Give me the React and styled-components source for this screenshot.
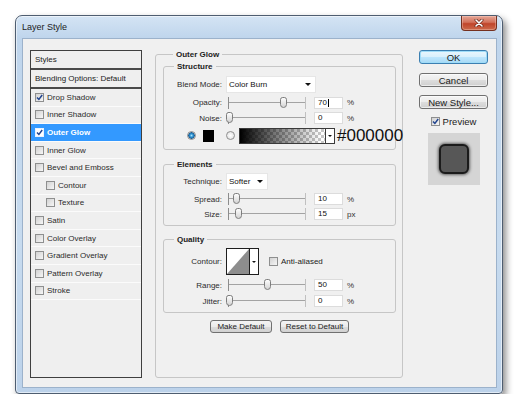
import React from "react";
import styled, { createGlobalStyle } from "styled-components";

const GlobalStyle = createGlobalStyle`
  html, body {
    margin: 0;
    padding: 0;
    background: #fff;
  }
  body {
    font-family: "Liberation Sans", Arial, sans-serif;
    color: #222;
  }
`;

const Page = styled.div`
  padding: 15px 0 0 15px;
`;

const Window = styled.div`
  box-sizing: border-box;
  width: 488px;
  height: 379px;
  display: flex;
  flex-direction: column;
  padding: 0 5px 5px 6px;
  border: 1px solid #4e5d70;
  border-radius: 7px 7px 4px 4px;
  background: linear-gradient(to bottom, #d4e4f4 0px, #bfd5ec 22px, #c7dbef 60%, #bcd2ea 100%);
  box-shadow: 3px 4px 7px rgba(0, 0, 0, 0.45), inset 0 0 0 1px rgba(255, 255, 255, 0.55);
`;

const TitleBar = styled.div`
  height: 22px;
  display: flex;
  justify-content: space-between;
  align-items: flex-start;
`;

const Title = styled.div`
  padding-top: 5px;
  font-size: 9px;
  line-height: 12px;
  color: #1b1b1b;
`;

const CloseButton = styled.div`
  box-sizing: border-box;
  width: 36px;
  height: 15px;
  display: flex;
  align-items: center;
  justify-content: center;
  border: 1px solid #74301f;
  border-top: none;
  border-radius: 0 0 4px 4px;
  background: linear-gradient(to bottom, #e6a696 0%, #d2715a 45%, #c0452a 55%, #cc6a4c 100%);
  box-shadow: inset 0 0 0 1px rgba(255, 220, 210, 0.35);
`;

const Body = styled.div`
  flex: 1;
  box-sizing: border-box;
  display: flex;
  gap: 13px;
  padding: 11px 8px 9px 7px;
  border: 1px solid #9cb2cb;
  background: #f0f0f0;
`;

/* ---------- left styles list ---------- */

const StylesPanel = styled.div`
  box-sizing: border-box;
  width: 112px;
  flex-shrink: 0;
  display: flex;
  flex-direction: column;
  border: 1px solid #3f3f3f;
  background: #efefef;
`;

const PanelHeader = styled.div`
  height: 17px;
  display: flex;
  align-items: center;
  padding-left: 4px;
  border-bottom: 2px solid #4a4a4a;
  font-size: 8px;
  color: #222;
  white-space: nowrap;
`;

const StyleItem = styled.div`
  box-sizing: border-box;
  height: 17.6px;
  display: flex;
  align-items: center;
  gap: 3px;
  padding-left: ${p => (p.$indent ? 15 : 4)}px;
  border-bottom: 1px solid #fbfbfb;
  background: ${p => (p.$selected ? "#3399ff" : "transparent")};
  color: ${p => (p.$selected ? "#fff" : "#2a2a2a")};
  font-weight: ${p => (p.$selected ? "bold" : "normal")};
  font-size: 8px;
  white-space: nowrap;
`;

const CheckBox = styled.span`
  box-sizing: border-box;
  width: 9px;
  height: 9px;
  flex-shrink: 0;
  display: inline-flex;
  align-items: center;
  justify-content: center;
  border: 1px solid ${p => (p.$onBlue ? "#e8f2ff" : "#8e8f8f")};
  background: ${p => (p.$onBlue ? "#fff" : "linear-gradient(135deg, #d2d2d2, #f6f6f6)")};
`;

const Check = () => (
  <svg width="7" height="7" viewBox="0 0 7 7">
    <path d="M1 3.4 L2.9 5.4 L6.2 1" fill="none" stroke="#22458f" strokeWidth="1.5" />
  </svg>
);

/* ---------- middle groups ---------- */

const Group = styled.fieldset`
  margin: 0;
  min-width: 0;
  border: 1px solid #c6c6c6;
  border-radius: 3px;
`;

const OuterGroup = styled(Group)`
  box-sizing: border-box;
  width: 248px;
  flex-shrink: 0;
  padding: 3px 6px 0 7px;
`;

const SubGroup = styled(Group)`
  margin-top: ${p => p.$top || 0}px;
  padding: ${p => p.$padTop}px 0 5px 0;
  display: flex;
  flex-direction: column;
  gap: ${p => p.$gap}px;
`;

const Legend = styled.legend`
  margin-left: 10px;
  padding: 0 3px;
  font-size: 8px;
  line-height: 9px;
  font-weight: bold;
  color: #222;
`;

const FieldRow = styled.div`
  display: flex;
  align-items: center;
  gap: 4px;
  height: ${p => p.$h}px;
`;

const Label = styled.div`
  width: 58px;
  flex-shrink: 0;
  text-align: right;
  font-size: 8px;
  color: #2b2b2b;
  white-space: nowrap;
`;

const Select = styled.div`
  box-sizing: border-box;
  width: ${p => p.$w}px;
  height: 17px;
  display: flex;
  align-items: center;
  justify-content: space-between;
  padding: 0 4px 0 2px;
  border: 1px solid #e6e6e6;
  background: #fff;
  font-size: 8px;
  color: #111;
`;

const DownTriangle = styled.span`
  width: 0;
  height: 0;
  border-left: ${p => p.$s || 3}px solid transparent;
  border-right: ${p => p.$s || 3}px solid transparent;
  border-top: ${p => p.$s || 3}px solid #111;
`;

const Slider = styled.div`
  position: relative;
  box-sizing: border-box;
  width: 78px;
  height: 12px;
  flex-shrink: 0;
  margin: 0 4px 0 2px;
  background: linear-gradient(to bottom, transparent 5px, #a3a3a3 5px, #a3a3a3 6px, transparent 6px);
  border-left: 1px solid #8c8c8c;
  border-right: 1px solid #c0c0c0;
  background-clip: content-box;
`;

const Thumb = styled.span`
  position: absolute;
  top: 0;
  box-sizing: border-box;
  width: 7px;
  height: 11px;
  border: 1px solid #7d7d7d;
  border-radius: 3px 3px 4px 4px;
  background: linear-gradient(to bottom, #fdfdfd, #d4d4d4);
`;

const NumberBox = styled.div`
  box-sizing: border-box;
  width: 29px;
  height: 12px;
  flex-shrink: 0;
  padding-left: 3px;
  border: 1px solid #dcdcdc;
  background: #fff;
  font-size: 8px;
  line-height: 10px;
  color: #111;
  display: flex;
  align-items: center;
`;

const Caret = styled.span`
  width: 1px;
  height: 8px;
  margin-left: 1px;
  background: #000;
`;

const Unit = styled.div`
  font-size: 8px;
  color: #333;
`;

const ColorRow = styled.div`
  display: flex;
  align-items: center;
  height: 16px;
  padding-left: 23px;
`;

const Radio = styled.span`
  box-sizing: border-box;
  width: 9px;
  height: 9px;
  flex-shrink: 0;
  border-radius: 50%;
  margin-left: ${p => p.$ml || 0}px;
  border: 1px solid #8f8f8f;
  background: ${p =>
    p.$on
      ? "radial-gradient(circle, #a8e4ff 0, #2f93d2 1.6px, #1c5f97 3px, #dedede 3.5px)"
      : "radial-gradient(circle, #ffffff 0, #e2e2e2 4px)"};
`;

const Swatch = styled.span`
  display: block;
  width: 11px;
  height: 12px;
  flex-shrink: 0;
  margin-left: 7px;
  background: #000;
`;

const GradientPicker = styled.div`
  box-sizing: border-box;
  width: 96px;
  height: 16px;
  margin-left: 4px;
  display: flex;
  border: 1px solid #3a3a3a;
  flex-shrink: 0;
`;

const GradientFill = styled.div`
  flex: 1;
  background:
    linear-gradient(to right, #000 0%, rgba(0, 0, 0, 0.55) 40%, rgba(0, 0, 0, 0) 95%),
    repeating-conic-gradient(#c6c6c6 0 25%, #ffffff 0 50%) 0 0 / 6px 6px;
`;

const PickerArrow = styled.div`
  width: 8px;
  display: flex;
  align-items: center;
  justify-content: center;
  border-left: 1px solid #3a3a3a;
  background: #fff;
`;

const HexText = styled.div`
  margin-left: 2px;
  font-size: 17px;
  line-height: 16px;
  color: #111;
  white-space: nowrap;
  flex-shrink: 0;
`;

const ContourPicker = styled.div`
  display: flex;
  height: 25px;
  flex-shrink: 0;
  border: 1px solid #1e1e1e;
  background: #fff;
`;

const ContourArrow = styled.div`
  width: 8px;
  display: flex;
  align-items: center;
  justify-content: center;
  border-left: 1px solid #1e1e1e;
`;

const InlineCheck = styled.label`
  display: flex;
  align-items: center;
  gap: 3px;
  margin-left: ${p => p.$ml || 0}px;
  margin-top: ${p => p.$mt || 0}px;
  font-size: ${p => p.$fs || 8}px;
  color: #222;
  white-space: nowrap;
`;

const ButtonRow = styled.div`
  display: flex;
  justify-content: center;
  gap: 8px;
  margin-top: 7px;
`;

const SmallButton = styled.div`
  box-sizing: border-box;
  width: ${p => p.$w}px;
  height: 13px;
  display: flex;
  align-items: center;
  justify-content: center;
  border: 1px solid #707070;
  border-radius: 3px;
  background: linear-gradient(to bottom, #f4f4f4 0%, #ebebeb 50%, #dddddd 51%, #d1d1d1 100%);
  font-size: 8px;
  color: #222;
  white-space: nowrap;
`;

/* ---------- right column ---------- */

const Side = styled.div`
  width: 69px;
  margin-left: 3px;
  display: flex;
  flex-direction: column;
  align-items: center;
`;

const DialogButton = styled.div`
  box-sizing: border-box;
  width: 69px;
  height: 14px;
  margin-top: ${p => p.$mt || 0}px;
  display: flex;
  align-items: center;
  justify-content: center;
  border: 1px solid ${p => (p.$default ? "#3c7fb1" : "#707070")};
  border-radius: 3px;
  background: ${p =>
    p.$default
      ? "linear-gradient(to bottom, #eaf6fd 0%, #d9f0fc 50%, #bee6fd 51%, #a7d9f5 100%)"
      : "linear-gradient(to bottom, #f4f4f4 0%, #ebebeb 50%, #dddddd 51%, #cfcfcf 100%)"};
  box-shadow: ${p => (p.$default ? "inset 0 0 0 1px #9fdcf8" : "inset 0 0 0 1px rgba(255,255,255,0.6)")};
  font-size: 9.5px;
  color: #1a1a1a;
`;

const PreviewBox = styled.div`
  width: 52px;
  height: 52px;
  margin-top: 6px;
  display: flex;
  align-items: center;
  justify-content: center;
  background: #d5d5d5;
`;

const PreviewShape = styled.div`
  box-sizing: border-box;
  width: 30px;
  height: 30px;
  border: 2px solid #1b1b1b;
  border-radius: 6px;
  background: #575757;
  box-shadow: 0 0 3px 1px rgba(0, 0, 0, 0.55);
`;

const styleItems = [
  { name: "Drop Shadow", checked: true },
  { name: "Inner Shadow" },
  { name: "Outer Glow", checked: true, selected: true },
  { name: "Inner Glow" },
  { name: "Bevel and Emboss" },
  { name: "Contour", indent: true },
  { name: "Texture", indent: true },
  { name: "Satin" },
  { name: "Color Overlay" },
  { name: "Gradient Overlay" },
  { name: "Pattern Overlay" },
  { name: "Stroke" },
];

const SliderField = ({ label, value, pos, unit, caret }) => (
  <FieldRow $h={12}>
    <Label>{label}</Label>
    <Slider>
      <Thumb style={{ left: `${pos * 76 - 3.5}px` }} />
    </Slider>
    <NumberBox>
      {value}
      {caret && <Caret />}
    </NumberBox>
    <Unit>{unit}</Unit>
  </FieldRow>
);

const App = () => (
  <Page>
    <GlobalStyle />
    <Window>
      <TitleBar>
        <Title>Layer Style</Title>
        <CloseButton>
          <svg width="10" height="8" viewBox="0 0 10 8">
            <path d="M2 1 L8 7 M8 1 L2 7" stroke="#6b2a1c" strokeWidth="3" strokeLinecap="round" />
            <path d="M2 1 L8 7 M8 1 L2 7" stroke="#fff" strokeWidth="1.6" strokeLinecap="round" />
          </svg>
        </CloseButton>
      </TitleBar>

      <Body>
        <StylesPanel>
          <PanelHeader>Styles</PanelHeader>
          <PanelHeader>Blending Options: Default</PanelHeader>
          {styleItems.map(item => (
            <StyleItem key={item.name} $indent={item.indent} $selected={item.selected}>
              <CheckBox $onBlue={item.selected}>{item.checked && <Check />}</CheckBox>
              {item.name}
            </StyleItem>
          ))}
        </StylesPanel>

        <OuterGroup>
          <Legend>Outer Glow</Legend>

          <SubGroup $padTop={5} $gap={3.5}>
            <Legend>Structure</Legend>
            <FieldRow $h={17}>
              <Label>Blend Mode:</Label>
              <Select $w={90}>
                Color Burn
                <DownTriangle />
              </Select>
            </FieldRow>
            <SliderField label="Opacity:" value="70" pos={0.72} unit="%" caret />
            <SliderField label="Noise:" value="0" pos={0.01} unit="%" />
            <ColorRow>
              <Radio $on />
              <Swatch />
              <Radio $ml={12} />
              <GradientPicker>
                <GradientFill />
                <PickerArrow>
                  <DownTriangle $s={2} />
                </PickerArrow>
              </GradientPicker>
              <HexText>#000000</HexText>
            </ColorRow>
          </SubGroup>

          <SubGroup $top={10} $padTop={4.5} $gap={3}>
            <Legend>Elements</Legend>
            <FieldRow $h={17}>
              <Label>Technique:</Label>
              <Select $w={42}>
                Softer
                <DownTriangle />
              </Select>
            </FieldRow>
            <SliderField label="Spread:" value="10" pos={0.1} unit="%" />
            <SliderField label="Size:" value="15" pos={0.13} unit="px" />
          </SubGroup>

          <SubGroup $top={8.5} $padTop={4.5} $gap={4}>
            <Legend>Quality</Legend>
            <FieldRow $h={27}>
              <Label>Contour:</Label>
              <ContourPicker>
                <svg width="22" height="25" viewBox="0 0 22 25">
                  <polygon points="0,25 22,0 22,25" fill="#8d8d8d" />
                </svg>
                <ContourArrow>
                  <DownTriangle $s={2} />
                </ContourArrow>
              </ContourPicker>
              <InlineCheck $ml={6}>
                <CheckBox />
                Anti-aliased
              </InlineCheck>
            </FieldRow>
            <SliderField label="Range:" value="50" pos={0.5} unit="%" />
            <SliderField label="Jitter:" value="0" pos={0.01} unit="%" />
          </SubGroup>

          <ButtonRow>
            <SmallButton $w={62}>Make Default</SmallButton>
            <SmallButton $w={69}>Reset to Default</SmallButton>
          </ButtonRow>
        </OuterGroup>

        <Side>
          <DialogButton $default>OK</DialogButton>
          <DialogButton $mt={9}>Cancel</DialogButton>
          <DialogButton $mt={8}>New Style...</DialogButton>
          <InlineCheck $fs={9.5} $mt={7}>
            <CheckBox>
              <Check />
            </CheckBox>
            Preview
          </InlineCheck>
          <PreviewBox>
            <PreviewShape />
          </PreviewBox>
        </Side>
      </Body>
    </Window>
  </Page>
);

export default App;
